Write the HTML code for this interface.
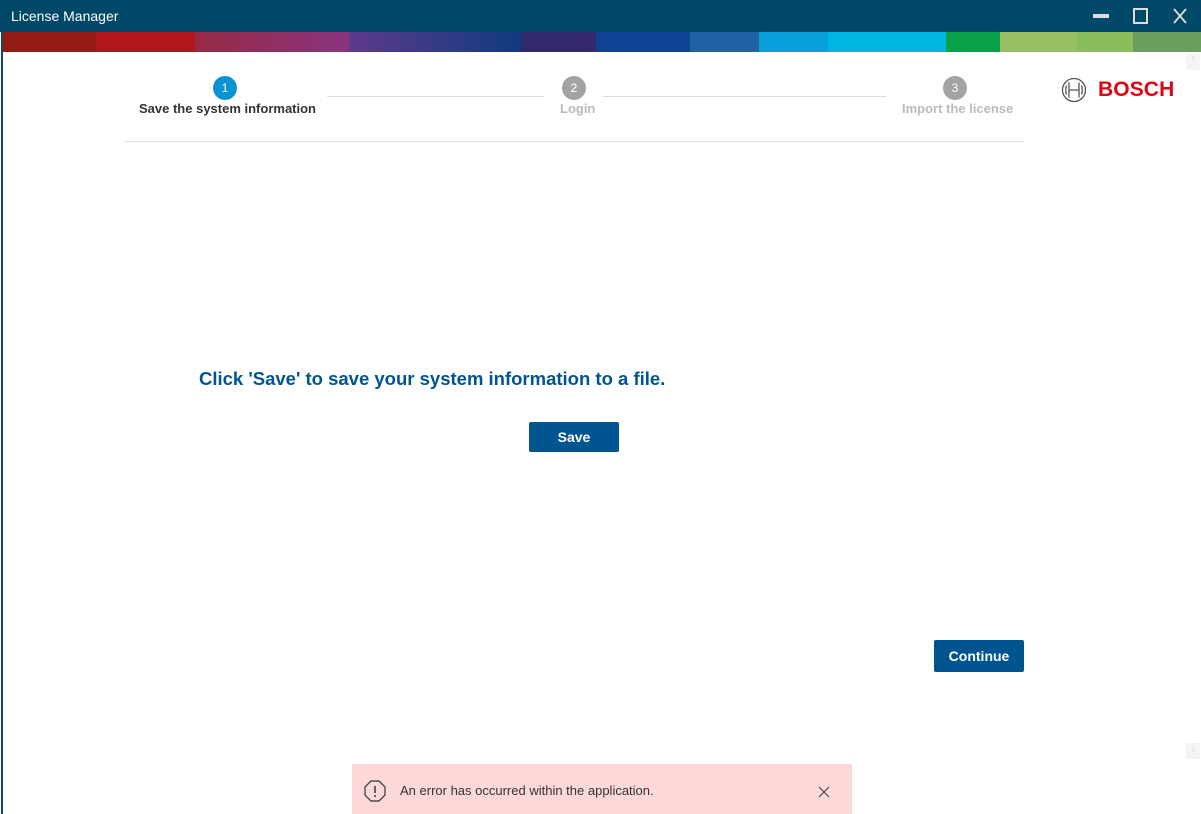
<!DOCTYPE html>
<html><head><meta charset="utf-8"><style>
*{margin:0;padding:0;box-sizing:border-box}
body{width:1201px;height:814px;overflow:hidden;background:#fff;font-family:"Liberation Sans",sans-serif;position:relative}
.tb{position:absolute;left:0;top:0;width:1201px;height:32px;background:#004868;color:#fff;font-size:14px}
.tb .t{position:absolute;left:11px;top:8px}
.stripe{position:absolute;left:3px;top:32px;width:1198px;height:20px;display:flex}
.stripe div{height:20px}
.lb{position:absolute;left:0;top:32px;width:3px;height:782px;background:#fff;border-right:2px solid #0a4a66}
.abs{position:absolute}
.circ{position:absolute;width:24px;height:24px;border-radius:50%;color:#fff;font-size:12px;text-align:center;line-height:24px}
.lbl{position:absolute;font-size:13px;font-weight:bold;white-space:nowrap}
.line{position:absolute;height:1px;background:#ddd}
.btn{position:absolute;background:#005590;color:#fff;font-weight:bold;font-size:14px;text-align:center;border-radius:2px}
</style></head><body>
<div class="tb"><span class="t">License Manager</span>
<div class="abs" style="left:1093px;top:14px;width:16px;height:4px;background:#ddd"></div>
<div class="abs" style="left:1133px;top:8px;width:15px;height:16px;border:2px solid #ddd"></div>
<svg class="abs" style="left:1172px;top:8px" width="16" height="16"><path d="M2 1L14 15M14 1L2 15" stroke="#ddd" stroke-width="1.8"/></svg>
</div>
<div class="stripe">
<div style="width:93px;background:#941a14"></div>
<div style="width:99px;background:#b2161a"></div>
<div style="width:154px;background:linear-gradient(90deg,#962a44,#8a3480)"></div>
<div style="width:172px;background:linear-gradient(90deg,#5e3a8a,#103a80)"></div>
<div style="width:75px;background:#35296e"></div>
<div style="width:94px;background:#0e4394"></div>
<div style="width:69px;background:#1e62a4"></div>
<div style="width:69px;background:#08a0d8"></div>
<div style="width:118px;background:#00b6e0"></div>
<div style="width:54px;background:#0aa04a"></div>
<div style="width:77px;background:#98c060"></div>
<div style="width:56px;background:#8abc5a"></div>
<div style="width:68px;background:#6a9e5e"></div>
</div>
<div class="lb"></div>

<div class="circ" style="left:213px;top:76px;background:#0a93d2">1</div>
<div class="lbl" style="left:139px;top:101px;color:#333">Save the system information</div>
<div class="line" style="left:327px;top:96px;width:217px"></div>
<div class="circ" style="left:562px;top:76px;background:#a3a3a3">2</div>
<div class="lbl" style="left:560px;top:101px;color:#bbb">Login</div>
<div class="line" style="left:603px;top:96px;width:283px"></div>
<div class="circ" style="left:943px;top:76px;background:#a3a3a3">3</div>
<div class="lbl" style="left:902px;top:101px;color:#bbb">Import the license</div>
<div class="line" style="left:124px;top:141px;width:900px"></div>

<svg class="abs" style="left:1061px;top:77px" width="26" height="26"><circle cx="13" cy="13" r="11.5" fill="none" stroke="#555" stroke-width="1.3"/><path d="M8 5.5V20.5M18 5.5V20.5M8 13H18M5.5 8.5Q4 13 5.5 17.5M20.5 8.5Q22 13 20.5 17.5" fill="none" stroke="#555" stroke-width="1.3"/></svg>
<div class="abs" style="left:1098px;top:78px;color:#e20015;font-weight:bold;font-size:21px;letter-spacing:0.1px">BOSCH</div>
<div class="abs" style="left:1186px;top:54px;width:14px;height:16px;background:#f4f4f4;color:#ccc;font-size:10px;text-align:center">↑</div>
<div class="abs" style="left:1186px;top:743px;width:14px;height:16px;background:#f4f4f4;color:#ccc;font-size:10px;text-align:center">↓</div>

<div class="abs" style="left:199px;top:368px;color:#005590;font-weight:bold;font-size:18.5px">Click 'Save' to save your system information to a file.</div>
<div class="btn" style="left:529px;top:422px;width:90px;height:30px;line-height:30px">Save</div>
<div class="btn" style="left:934px;top:640px;width:90px;height:32px;line-height:32px">Continue</div>

<div class="abs" style="left:352px;top:764px;width:500px;height:50px;background:#fdd8d8"></div>
<svg class="abs" style="left:364px;top:780px" width="22" height="22"><path d="M7 1H15L21 7V15L15 21H7L1 15V7Z" fill="none" stroke="#333" stroke-width="1.2"/><path d="M11 6V13" stroke="#333" stroke-width="1.5"/><circle cx="11" cy="16" r="1" fill="#333"/></svg>
<div class="abs" style="left:400px;top:783px;font-size:13px;color:#333">An error has occurred within the application.</div>
<svg class="abs" style="left:818px;top:786px" width="12" height="12"><path d="M1 1L11 11M11 1L1 11" stroke="#444" stroke-width="1.2"/></svg>
</body></html>
